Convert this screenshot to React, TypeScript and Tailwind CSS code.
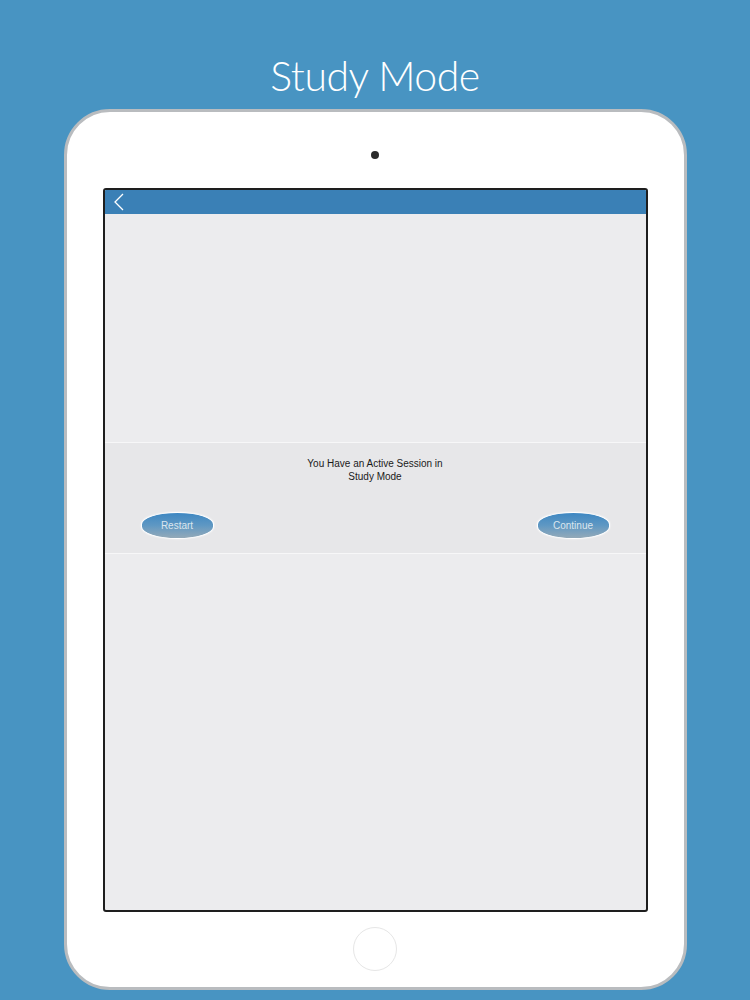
export default function App() {
  return (
    <div className="w-[750px] h-[1000px] bg-[#4894c2] flex flex-col items-center overflow-hidden">
      <h1 className="mt-[52px] h-[48px] text-[41px] leading-[48px] font-light text-white font-['Lato',sans-serif] tracking-[-0.5px]">
        Study Mode
      </h1>

      <div className="mt-[9px] w-[623px] h-[881px] bg-white rounded-[46px] border-[3px] border-[#b9bcbf] flex flex-col items-center">
        <div className="mt-[39px] w-[8px] h-[8px] rounded-full bg-[#2b2b2b]" />

        <div className="mt-[29px] w-[545px] h-[724px] border-2 border-[#1e1e1e] rounded-[3px] bg-[#ececee] flex flex-col overflow-hidden">
          <div className="h-[24px] bg-[#3a80b6] flex items-center pl-[8px]">
            <svg width="12" height="18" viewBox="0 0 12 18" fill="none">
              <path d="M10 1 L2 9 L10 17" stroke="white" strokeWidth="1.3" />
            </svg>
          </div>

          <div className="h-[228px]" />

          <div className="h-[112px] bg-[#e7e7e9] border-t border-b border-[#f7f7f8] flex flex-col font-['Liberation_Sans',Arial,sans-serif]">
            <p className="mt-[14px] text-center text-[10px] leading-[13px] text-[#1a1a1a]">
              You Have an Active Session in
              <br />
              Study Mode
            </p>
            <div className="mt-[29px] flex justify-between px-[36px]">
              <SessionButton label="Restart" />
              <SessionButton label="Continue" />
            </div>
          </div>

          <div className="flex-1" />
        </div>

        <div className="mt-[15px] w-[44px] h-[44px] rounded-full border-[1.5px] border-[#e6e6e6]" />
      </div>
    </div>
  );
}

function SessionButton({ label }: { label: string }) {
  return (
    <div className="w-[73px] h-[27px] rounded-[50%/45%] border border-white bg-gradient-to-b from-[#3d87c2] via-[#5f98c3] to-[#93a9b8] shadow-[0_0_2px_rgba(255,255,255,0.9)] flex items-center justify-center text-[10px] text-[#dbe6ee]">
      {label}
    </div>
  );
}
